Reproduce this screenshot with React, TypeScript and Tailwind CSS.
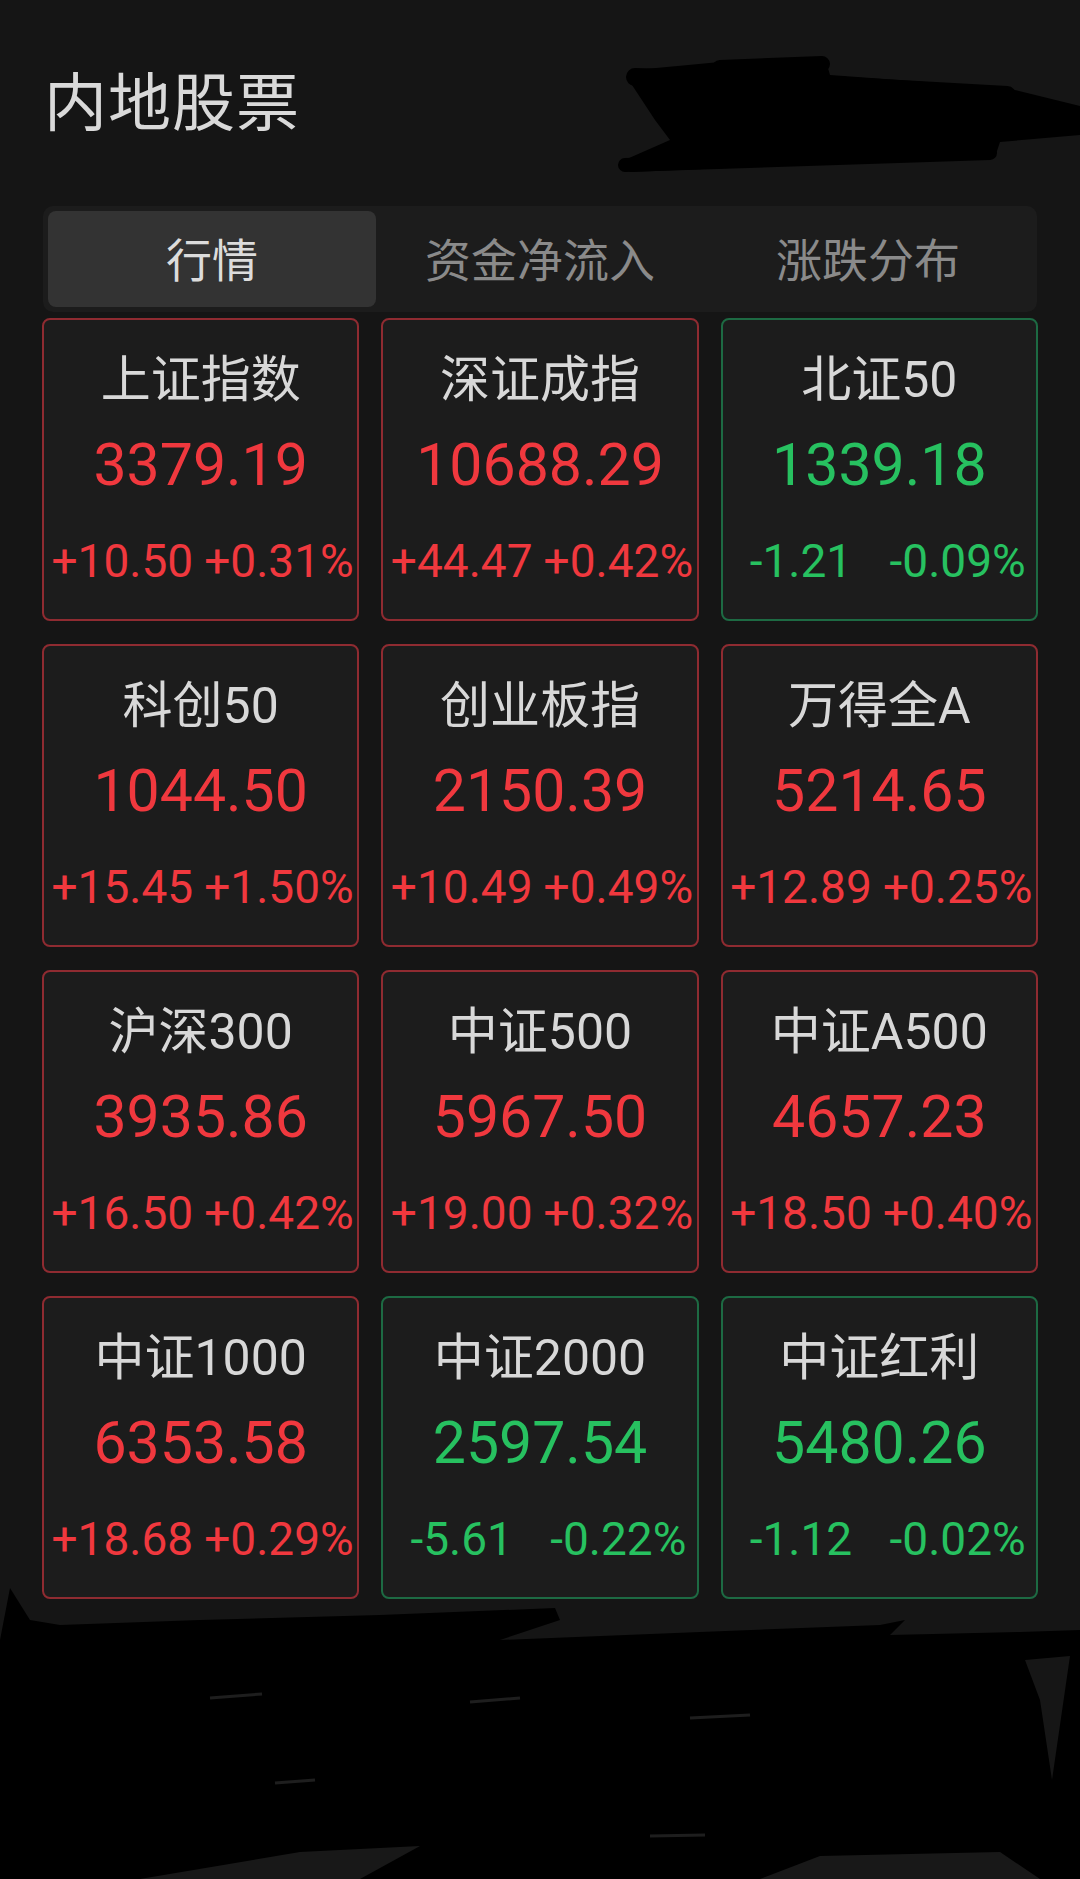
import React from 'react'

type Quote = {
  name: string
  price: string
  change: string
  pct: string
  up: boolean
}

const quotes: Quote[] = [
  { name: '上证指数', price: '3379.19', change: '+10.50', pct: '+0.31%', up: true },
  { name: '深证成指', price: '10688.29', change: '+44.47', pct: '+0.42%', up: true },
  { name: '北证50', price: '1339.18', change: '-1.21', pct: '-0.09%', up: false },
  { name: '科创50', price: '1044.50', change: '+15.45', pct: '+1.50%', up: true },
  { name: '创业板指', price: '2150.39', change: '+10.49', pct: '+0.49%', up: true },
  { name: '万得全A', price: '5214.65', change: '+12.89', pct: '+0.25%', up: true },
  { name: '沪深300', price: '3935.86', change: '+16.50', pct: '+0.42%', up: true },
  { name: '中证500', price: '5967.50', change: '+19.00', pct: '+0.32%', up: true },
  { name: '中证A500', price: '4657.23', change: '+18.50', pct: '+0.40%', up: true },
  { name: '中证1000', price: '6353.58', change: '+18.68', pct: '+0.29%', up: true },
  { name: '中证2000', price: '2597.54', change: '-5.61', pct: '-0.22%', up: false },
  { name: '中证红利', price: '5480.26', change: '-1.12', pct: '-0.02%', up: false },
]

const tabs = ['行情', '资金净流入', '涨跌分布']

function QuoteCard({ q }: { q: Quote }) {
  const color = q.up ? 'text-[#f0383e]' : 'text-[#27c160]'
  return (
    <div
      className={`h-[303px] rounded-[8px] border-2 bg-[#1c1c1c] flex flex-col items-center pt-[35px] ${
        q.up ? 'border-[#8f2b31]' : 'border-[#1d6a43]'
      }`}
    >
      <div className="text-[50px] leading-[50px] text-[#d8d8d8] whitespace-nowrap">{q.name}</div>
      <div className={`mt-[31px] text-[59px] leading-[58px] whitespace-nowrap ${color}`}>{q.price}</div>
      <div className={`mt-[45px] w-full flex text-[46px] leading-[45px] ${color}`}>
        <span className="flex-1 flex justify-center whitespace-nowrap">{q.change}</span>
        <span className="flex-1 flex justify-center whitespace-nowrap">{q.pct}</span>
      </div>
    </div>
  )
}

export default function App() {
  return (
    <div className="relative w-[1080px] h-[1879px] overflow-hidden bg-[#151515] font-[Roboto,'Noto_Sans_CJK_SC',sans-serif]">
      <h1 className="pl-[44px] pt-[72px] text-[63px] leading-[63px] text-[#d9d9d9] tracking-[1px]">内地股票</h1>

      {/* tabs */}
      <div className="mx-[43px] mt-[71px] h-[106px] rounded-[10px] bg-[#1c1c1c] p-[5px] flex">
        {tabs.map((t, i) => (
          <div
            key={t}
            className={`flex-1 flex items-center justify-center pt-[4px] rounded-[8px] text-[46px] ${
              i === 0 ? 'bg-[#333333] text-[#dcdcdc]' : 'text-[#8a8a8a]'
            }`}
          >
            {t}
          </div>
        ))}
      </div>

      {/* grid */}
      <div className="mx-[42px] mt-[6px] grid grid-cols-3 gap-x-[22px] gap-y-[23px]">
        {quotes.map((q) => (
          <QuoteCard key={q.name} q={q} />
        ))}
      </div>

      {/* top-right scribble */}
      <svg className="absolute left-[560px] top-[40px]" width="520" height="150" viewBox="0 0 520 150">
        <path
          d="M75 30 L160 22 L265 18 L270 35 L447 48 L520 66 L520 95 L440 102 L435 117 L70 132 L60 122 L110 100 L95 80 L72 45 Z"
          fill="#000"
        />
        <g stroke="#000" strokeLinecap="round" strokeLinejoin="round" fill="none">
          <path d="M160 28 L262 24" strokeWidth="16" />
          <path d="M75 37 L180 40 L447 55" strokeWidth="18" />
          <path d="M65 125 L430 113" strokeWidth="14" />
        </g>
      </svg>

      {/* bottom scribble */}
      <svg className="absolute left-0 top-[1580px]" width="1080" height="299" viewBox="0 0 1080 299">
        <path
          d="M0 60 L10 8 L30 40 L60 45 L200 40 L380 35 L555 28 L560 40 L500 60 L700 52 L880 45 L905 40 L890 55 L1020 52 L1080 50 L1080 299 L0 299 Z"
          fill="#000"
        />
        <path d="M140 299 L300 272 L420 266 L360 299 Z" fill="#181818" />
        <path d="M760 299 L820 276 L1000 272 L1040 299 Z" fill="#181818" />
        <path d="M1025 80 L1070 76 L1052 200 L1040 120 Z" fill="#161616" />
        <path d="M210 118 L262 114" stroke="#1e1e1e" strokeWidth="3" />
        <path d="M470 122 L520 118" stroke="#1e1e1e" strokeWidth="3" />
        <path d="M690 138 L750 135" stroke="#1e1e1e" strokeWidth="3" />
        <path d="M275 203 L315 200" stroke="#1e1e1e" strokeWidth="3" />
        <path d="M650 256 L705 255" stroke="#1e1e1e" strokeWidth="3" />
      </svg>
    </div>
  )
}
